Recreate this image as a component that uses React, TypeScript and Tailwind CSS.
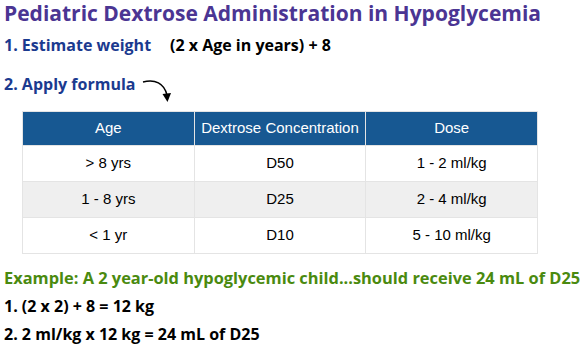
const HEAD = ["Age", "Dextrose Concentration", "Dose"];

const ROWS = [
  ["> 8 yrs", "D50", "1 - 2 ml/kg"],
  ["1 - 8 yrs", "D25", "2 - 4 ml/kg"],
  ["< 1 yr", "D10", "5 - 10 ml/kg"],
];

export default function App() {
  return (
    <div
      className="h-[347px] w-[585px] overflow-hidden bg-white"
      style={{ fontFamily: '"Open Sans", sans-serif' }}
    >
      <h1 className="pl-[4px] pt-[0px] text-[21px] font-bold leading-[26px] text-[#4b3593]">
        Pediatric Dextrose Administration in Hypoglycemia
      </h1>

      <div className="mt-[9px] flex items-baseline pl-[4px] text-[16px] font-bold leading-[20px]">
        <span className="w-[166px] text-[#1b3a8f]">1. Estimate weight</span>
        <span className="text-black">(2 x Age in years) + 8</span>
      </div>

      <div className="mt-[19px] flex items-start pl-[4px] text-[16px] font-bold leading-[20px] text-[#1b3a8f]">
        <span>2. Apply formula</span>
        <svg width="32" height="28" viewBox="0 0 32 28" className="ml-[7px] mt-[5px]">
          <path d="M1 3 C 13 0, 22 4, 25 16" fill="none" stroke="#000" strokeWidth="1.5" />
          <path d="M20.5 15 L 25.5 23 L 29 14 Z" fill="#000" />
        </svg>
      </div>

      <table
        className="ml-[22px] mt-[4px] w-[516px] table-fixed border-collapse text-center text-[15px] text-black"
        style={{ fontFamily: '"Liberation Sans", Arial, sans-serif' }}
      >
        <thead>
          <tr className="h-[34px] bg-[#175892] text-white">
            {HEAD.map((h) => (
              <th key={h} className="border border-[#e4e4e4] font-normal">
                {h}
              </th>
            ))}
          </tr>
        </thead>
        <tbody>
          {ROWS.map((row, i) => (
            <tr key={i} className={`h-[36px] ${i === 1 ? "bg-[#efefef]" : "bg-white"}`}>
              {row.map((c, j) => (
                <td key={j} className="border border-[#e4e4e4]">
                  {c}
                </td>
              ))}
            </tr>
          ))}
        </tbody>
      </table>

      <p className="mt-[14px] pl-[4px] text-[16.4px] font-bold leading-[20px] text-[#4a8a0f]">
        Example: A 2 year-old hypoglycemic child...should receive 24 mL of D25
      </p>
      <p className="mt-[8px] pl-[4px] text-[16px] font-bold leading-[20px] text-black">
        1. (2 x 2) + 8 = 12 kg
      </p>
      <p className="mt-[8px] pl-[4px] text-[16px] font-bold leading-[20px] text-black">
        2. 2 ml/kg x 12 kg = 24 mL of D25
      </p>
    </div>
  );
}
